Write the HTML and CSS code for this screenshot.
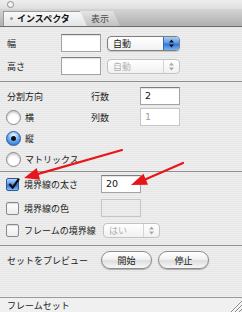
FILE: index.html
```html
<!DOCTYPE html>
<html lang="ja">
<head>
<meta charset="utf-8">
<title>インスペクタ</title>
<link rel="stylesheet" href="styles.css">
</head>
<body>
<div class="win">
  <div class="titlebar"><span class="dot"></span></div>
  <div class="tabs">
    <div class="tab active"><span class="tri"></span>インスペクタ</div>
    <div class="tab other">表示</div>
  </div>

  <section class="s1">
    <div class="r1">
      <span class="lbl">幅</span>
      <span class="field"></span>
      <span class="popup w73"><span class="ptxt">自動</span><span class="parr blue"><svg width="7" height="9" viewBox="0 0 7 9"><path d="M3.5 0.5 L6 3.5 H1 Z M3.5 8.5 L6 5.5 H1 Z" fill="#111"/></svg></span></span>
    </div>
    <div class="r1">
      <span class="lbl">高さ</span>
      <span class="field"></span>
      <span class="popup w73 dis"><span class="ptxt">自動</span><span class="parr"><svg width="7" height="9" viewBox="0 0 7 9"><path d="M3.5 0.5 L6 3.5 H1 Z M3.5 8.5 L6 5.5 H1 Z" fill="#aaa"/></svg></span></span>
    </div>
  </section>
  <div class="sep"></div>

  <section class="s2">
    <div class="r2">
      <span class="lbl">分割方向</span>
      <span class="lbl">行数</span>
      <span class="field num">2</span>
    </div>
    <div class="r2">
      <span class="opt"><span class="radio"></span>横</span>
      <span class="lbl">列数</span>
      <span class="field num dis">1</span>
    </div>
    <div class="r2">
      <span class="opt"><span class="radio on"></span>縦</span>
    </div>
    <div class="r2">
      <span class="opt"><span class="radio"></span>マトリックス</span>
    </div>
  </section>
  <div class="sep"></div>

  <section class="s3">
    <div class="r3">
      <span class="check on"><svg width="13" height="13" viewBox="0 0 13 13"><path d="M3 6.5 L5.6 9.8 L11.5 1.5" fill="none" stroke="#111" stroke-width="2.2" stroke-linecap="round" stroke-linejoin="round"/></svg></span>
      <span class="lbl">境界線の太さ</span>
      <span class="field num">20</span>
    </div>
    <div class="r3 g6">
      <span class="check"></span>
      <span class="lbl">境界線の色</span>
      <span class="field dis color"></span>
    </div>
    <div class="r3 g4">
      <span class="check"></span>
      <span class="lbl">フレームの境界線</span>
      <span class="popup w57 dis"><span class="ptxt">はい</span><span class="parr"><svg width="7" height="9" viewBox="0 0 7 9"><path d="M3.5 0.5 L6 3.5 H1 Z M3.5 8.5 L6 5.5 H1 Z" fill="#aaa"/></svg></span></span>
    </div>
  </section>
  <div class="sep"></div>

  <section class="s4">
    <span class="lbl">セットをプレビュー</span>
    <span class="btn">開始</span>
    <span class="btn">停止</span>
  </section>

  <footer class="foot">
    <span class="ftxt">フレームセット</span>
    <svg class="grip" width="12" height="14" viewBox="0 0 12 14"><path d="M12 3 L1 14 M12 7 L5 14 M12 11 L9 14" stroke="#8a8a8a" stroke-width="1"/><path d="M12 4 L2 14 M12 8 L6 14" stroke="#ffffff" stroke-width="1"/></svg>
  </footer>
</div>

<svg class="arrows" width="242" height="312" viewBox="0 0 242 312">
  <line x1="122" y1="150" x2="38.4" y2="173.9" stroke="#e8151b" stroke-width="2.2" stroke-linecap="round"/>
  <polygon points="24,178 36.7,168.1 40.1,179.7" fill="#e8151b"/>
  <line x1="183" y1="163" x2="145.7" y2="179.2" stroke="#e8151b" stroke-width="2.2" stroke-linecap="round"/>
  <polygon points="131,185 143.4,173.7 148,184.7" fill="#e8151b"/>
</svg>
</body>
</html>
```

FILE: styles.css
```css
* { box-sizing: border-box; }
html, body { margin: 0; padding: 0; }
body {
  width: 242px;
  height: 312px;
  overflow: hidden;
  position: relative;
  font-family: "Noto Sans CJK JP", "Noto Sans", sans-serif;
  font-size: 9px;
  color: #1a1a1a;
  background: repeating-linear-gradient(to bottom, #efefef 0 1px, #e6e6e6 1px 2px);
}
.win { display: flex; flex-direction: column; height: 312px; }

.titlebar {
  height: 9px;
  padding: 1px 0 0 7px;
  background: linear-gradient(#eeeeee, #dedede);
}
.dot {
  display: block;
  width: 7px;
  height: 7px;
  border: 1px solid #8c8c8c;
  border-radius: 50%;
  background: #f4f4f4;
}

.tabs {
  height: 18px;
  display: flex;
  align-items: flex-end;
  padding-left: 3px;
  background: linear-gradient(#d4d4d4, #b0b0b0);
  border-bottom: 1px solid #6e6e6e;
}
.tab { height: 15px; display: flex; align-items: center; line-height: 1; }
.tab.active {
  position: relative;
  z-index: 1;
  width: 84px;
  padding-left: 7px;
  font-weight: bold;
  color: #111;
  background: linear-gradient(#fbfbfb, #e4e4e4);
  clip-path: polygon(0 0, 77px 0, 100% 100%, 0 100%);
  box-shadow: inset 1px 1px 0 #9a9a9a;
}
.tri {
  width: 3px; height: 3px; border-radius: 50%;
  background: #9c9c9c; margin-right: 4px;
}
.tab.other {
  width: 40px;
  margin-left: -7px;
  padding-left: 11px;
  color: #4a4a4a;
  background: linear-gradient(#e4e4e4, #c2c2c2);
  clip-path: polygon(0 0, 33px 0, 100% 100%, 0 100%);
}

.lbl { white-space: nowrap; line-height: 1; }

.field {
  display: block;
  width: 40px;
  height: 18px;
  background: #fff;
  border: 1px solid #a4a4a4;
  border-top-color: #7c7c7c;
  box-shadow: inset 0 1px 1px rgba(0,0,0,0.12);
}
.field.num {
  font-family: "DejaVu Sans", sans-serif;
  font-size: 9.5px;
  line-height: 16px;
  padding-left: 4px;
  color: #111;
}
.field.dis {
  border-color: #c6c6c6;
  box-shadow: none;
  color: #a0a0a0;
}
.field.color { background: transparent; }

.popup {
  display: flex;
  height: 15px;
  border: 1px solid #7e7e7e;
  border-radius: 4px;
  background: linear-gradient(#ffffff, #f1f1f1);
  box-shadow: 0 1px 1px rgba(0,0,0,0.15);
  overflow: hidden;
}
.w73 { width: 73px; }
.w57 { width: 57px; }
.ptxt { flex: 1; padding-left: 5px; line-height: 13px; }
.parr {
  width: 16px;
  display: flex;
  align-items: center;
  justify-content: center;
  border-left: 1px solid #c8c8c8;
}
.parr.blue {
  border-left-color: #3b69ad;
  background: linear-gradient(#a9cdf6 0%, #5b9be8 45%, #2f74d8 55%, #7ab4f2 100%);
}
.popup.dis {
  border-color: #c2c2c2;
  box-shadow: none;
  color: #b2b2b2;
}
.popup.dis .parr { border-left-color: #d4d4d4; }

.s1 {
  display: flex;
  flex-direction: column;
  gap: 5px;
  padding: 7px 0 6px 7px;
}
.r1 {
  display: grid;
  grid-template-columns: 48px 40px 73px;
  column-gap: 6px;
  align-items: center;
  height: 18px;
}

.sep { height: 1px; background: #8f8f8f; }

.s2 {
  display: flex;
  flex-direction: column;
  gap: 3px;
  padding: 5px 0 3px 7px;
}
.r2 {
  display: grid;
  grid-template-columns: 84px 49px 40px;
  align-items: center;
  height: 18px;
}
.opt { display: flex; align-items: center; gap: 4px; margin-left: -1px; white-space: nowrap; }
.radio {
  flex: none;
  width: 15px;
  height: 15px;
  border-radius: 50%;
  border: 1px solid #8a8a8a;
  background: radial-gradient(circle at 50% 70%, #ffffff 0 40%, #e4e4e4 100%);
  box-shadow: inset 0 1px 2px rgba(0,0,0,0.2);
  display: flex;
  align-items: center;
  justify-content: center;
}
.radio.on {
  border-color: #2d5aa0;
  background: radial-gradient(circle at 50% 30%, #d6ebff 0 15%, #5a9ff0 55%, #1f5fc4 100%);
  box-shadow: none;
}
.radio.on::after {
  content: "";
  width: 5px; height: 5px; border-radius: 50%;
  background: #111;
}

.s3 {
  display: flex;
  flex-direction: column;
  padding: 3px 0 6px 6px;
}
.r3 {
  display: grid;
  grid-template-columns: 18px 77px auto;
  align-items: center;
  height: 18px;
}
.r3.g6 { margin-top: 6px; }
.r3.g4 { margin-top: 4px; }
.r3 .popup { margin-left: 2px; }
.check {
  width: 13px;
  height: 13px;
  border: 1px solid #8a8a8a;
  border-radius: 2px;
  background: linear-gradient(#ffffff, #ececec);
  box-shadow: inset 0 1px 1px rgba(0,0,0,0.15);
  position: relative;
}
.check.on {
  border-color: #2d5aa0;
  background: linear-gradient(#b6d6fa 0%, #5c9ce8 45%, #2d70d4 55%, #86bdf5 100%);
  box-shadow: none;
}
.check svg { position: absolute; left: 0; top: -1px; }

.s4 {
  display: grid;
  grid-template-columns: 88px 51px 51px;
  column-gap: 6px;
  align-items: center;
  padding: 5px 0 0 7px;
  flex: 1;
  align-content: start;
  height: 18px;
}
.btn {
  height: 18px;
  border: 1px solid #8c8c8c;
  border-radius: 9px;
  background: linear-gradient(#ffffff 0%, #f2f2f2 45%, #dedede 55%, #f8f8f8 100%);
  box-shadow: 0 1px 1px rgba(0,0,0,0.25);
  display: flex;
  align-items: center;
  justify-content: center;
  line-height: 1;
}

.foot {
  height: 15px;
  border-top: 1px solid #9a9a9a;
  background: #f0f0f0;
  display: flex;
  align-items: center;
  justify-content: space-between;
  padding-left: 7px;
}
.ftxt { line-height: 1; }
.grip { align-self: flex-end; }

.arrows { position: absolute; left: 0; top: 0; pointer-events: none; }
```
